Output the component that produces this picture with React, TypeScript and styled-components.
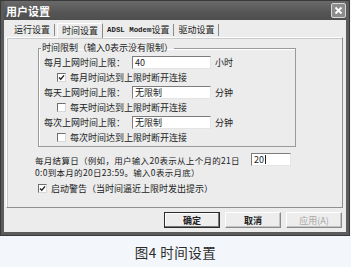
import React from "react";
import styled, { createGlobalStyle } from "styled-components";

const GlobalStyle = createGlobalStyle`
  html, body {
    margin: 0;
    padding: 0;
    background: #f3f7fb;
  }
`;

const UI_FONT = `"Noto Sans CJK SC", "Noto Sans", sans-serif`;

const Page = styled.div`
  width: 351px;
  height: 267px;
  display: flex;
  flex-direction: column;
  font-family: ${UI_FONT};
  color: #222;
`;

const Window = styled.div`
  width: 350px;
  height: 236px;
  box-sizing: border-box;
  display: flex;
  flex-direction: column;
  background: #5b5b5b;
  border: 1px solid #3a3a3a;
  padding: 0 3px 3px;
`;

const TitleBar = styled.div`
  height: 19px;
  display: flex;
  align-items: center;
  justify-content: space-between;
  padding: 0 0 0 2px;
  background: linear-gradient(#6a6a6a, #555 60%, #4e4e4e);
`;

const Title = styled.span`
  color: #fff;
  font-size: 11px;
  font-weight: 700;
  line-height: 12px;
`;

const CloseButton = styled.div`
  width: 13px;
  height: 13px;
  display: flex;
  align-items: center;
  justify-content: center;
  background: #8c8c8c;
  border: 1px solid #d6d6d6;
  border-radius: 2px;
`;

const Body = styled.div`
  flex: 1;
  display: flex;
  flex-direction: column;
  background: #ececec;
  padding: 2px 3px 0 2px;
`;

const TabStrip = styled.div`
  height: 15px;
  display: flex;
  align-items: flex-end;
  padding-left: 4px;
  position: relative;
  z-index: 1;
`;

const Tab = styled.div<{ $active?: boolean }>`
  height: ${({ $active }) => ($active ? "15px" : "12px")};
  box-sizing: border-box;
  display: flex;
  align-items: center;
  padding: 0 4px;
  font-size: 9px;
  line-height: 10px;
  white-space: nowrap;
  background: #ececec;
  border-right: 1px solid #8a8a8a;
  border-left: ${({ $active }) => ($active ? "1px solid #fff" : "none")};
  border-top: ${({ $active }) => ($active ? "1px solid #fff" : "none")};
  margin-bottom: ${({ $active }) => ($active ? "-1px" : "1px")};
  margin-left: ${({ $active }) => ($active ? "2px" : "0")};
`;

const Mono = styled.span`
  font-family: "Liberation Mono", monospace;
  font-weight: 700;
  font-size: 7.4px;
`;

const Panel = styled.div`
  height: 171px;
  box-sizing: border-box;
  border: 1px solid #8f8f8f;
  border-left-color: #fff;
  border-top-color: #fff;
  box-shadow: 1px 0 0 #c9c9c9 inset, 0 1px 0 #c9c9c9 inset;
  padding: 4px 0 0 28px;
  display: flex;
  flex-direction: column;
`;

const Group = styled.fieldset`
  width: 258px;
  box-sizing: border-box;
  margin: 0 0 0 3px;
  padding: 1px 4px 1px 5px;
  border: 1px solid #9a9a9a;
  box-shadow: 1px 1px 0 #fff inset;
  min-width: 0;
`;

const Legend = styled.legend`
  padding: 0 1px;
  margin-left: -3px;
  font-size: 9px;
  line-height: 12px;
`;

const FieldRow = styled.div`
  height: 15px;
  display: flex;
  align-items: center;
  font-size: 9px;
`;

const FieldLabel = styled.span`
  width: 88px;
  white-space: nowrap;
`;

const TextBox = styled.div<{ $width: number }>`
  width: ${({ $width }) => $width}px;
  height: 13px;
  box-sizing: border-box;
  display: flex;
  align-items: center;
  padding-left: 2px;
  background: #fff;
  border-top: 1px solid #7c7c7c;
  border-left: 1px solid #7c7c7c;
  border-right: 1px solid #e4e4e4;
  border-bottom: 1px solid #e4e4e4;
  font-size: 9px;
  line-height: 10px;
`;

const Caret = styled.span`
  width: 1px;
  height: 9px;
  background: #222;
  margin-left: 1px;
`;

const Unit = styled.span`
  margin-left: 4px;
`;

const CheckRow = styled.div<{ $indent: number; $gap: number }>`
  height: 15px;
  display: flex;
  align-items: center;
  gap: ${({ $gap }) => $gap}px;
  padding-left: ${({ $indent }) => $indent}px;
  font-size: 9px;
  white-space: nowrap;
`;

const CheckBox = styled.div`
  width: 9px;
  height: 9px;
  box-sizing: border-box;
  display: flex;
  align-items: center;
  justify-content: center;
  background: #fff;
  border-top: 1px solid #6e6e6e;
  border-left: 1px solid #6e6e6e;
  border-right: 1px solid #d8d8d8;
  border-bottom: 1px solid #d8d8d8;
`;

const SettleRow = styled.div`
  display: flex;
  align-items: flex-start;
  margin-top: 6px;
`;

const SettleText = styled.div`
  width: 216px;
  padding-top: 1px;
  display: flex;
  flex-direction: column;
`;

const SettleLine = styled.span`
  height: 12px;
  display: flex;
  align-items: center;
  font-size: 8.5px;
  letter-spacing: 0.3px;
  white-space: nowrap;
`;

const WarnRow = styled(CheckRow)`
  margin-top: 3px;
`;

const ButtonRow = styled.div`
  display: flex;
  justify-content: flex-end;
  gap: 5px;
  margin-top: 4px;
  padding-right: 1px;
`;

const DialogButton = styled.div<{ $default?: boolean; $disabled?: boolean }>`
  width: 56px;
  height: 16px;
  box-sizing: border-box;
  display: flex;
  align-items: center;
  justify-content: center;
  font-size: 9px;
  font-weight: ${({ $disabled }) => ($disabled ? 400 : 700)};
  color: ${({ $disabled }) => ($disabled ? "#a8a8a8" : "#222")};
  background: #ededed;
  border: 1px solid;
  border-color: ${({ $default }) =>
    $default ? "#2a2a2a" : "#fff #8a8a8a #8a8a8a #fff"};
  box-shadow: ${({ $default }) =>
    $default ? "inset -1px -1px 0 #777, inset 1px 1px 0 #fff" : "inset -1px -1px 0 #c4c4c4"};
`;

const Caption = styled.div`
  flex: 1;
  display: flex;
  align-items: center;
  justify-content: center;
  padding-top: 1px;
  font-size: 13.5px;
  color: #2a2a2a;
  letter-spacing: 0.5px;
`;

const Check = () => (
  <svg width="7" height="7" viewBox="0 0 7 7">
    <path d="M1 3.4 L2.8 5.2 L6 1.4" fill="none" stroke="#222" strokeWidth="1.4" />
  </svg>
);

const CloseGlyph = () => (
  <svg width="9" height="9" viewBox="0 0 9 9">
    <path d="M1.5 1.5 L7.5 7.5 M7.5 1.5 L1.5 7.5" stroke="#fff" strokeWidth="1.8" />
  </svg>
);

const limits = [
  { label: "每月上网时间上限：", value: "40", unit: "小时", check: "每月时间达到上限时断开连接", checked: true },
  { label: "每天上网时间上限：", value: "无限制", unit: "分钟", check: "每天时间达到上限时断开连接", checked: false },
  { label: "每次上网时间上限：", value: "无限制", unit: "分钟", check: "每次时间达到上限时断开连接", checked: false },
];

export default function App() {
  return (
    <Page>
      <GlobalStyle />
      <Window>
        <TitleBar>
          <Title>用户设置</Title>
          <CloseButton>
            <CloseGlyph />
          </CloseButton>
        </TitleBar>
        <Body>
          <TabStrip>
            <Tab>运行设置</Tab>
            <Tab $active>时间设置</Tab>
            <Tab>
              <Mono>ADSL Modem</Mono>设置
            </Tab>
            <Tab>驱动设置</Tab>
          </TabStrip>
          <Panel>
            <Group>
              <Legend>时间限制（输入0表示没有限制）</Legend>
              {limits.map((item) => (
                <React.Fragment key={item.label}>
                  <FieldRow>
                    <FieldLabel>{item.label}</FieldLabel>
                    <TextBox $width={79}>{item.value}</TextBox>
                    <Unit>{item.unit}</Unit>
                  </FieldRow>
                  <CheckRow $indent={13} $gap={4}>
                    <CheckBox>{item.checked && <Check />}</CheckBox>
                    {item.check}
                  </CheckRow>
                </React.Fragment>
              ))}
            </Group>
            <SettleRow>
              <SettleText>
                <SettleLine>每月结算日（例如，用户输入20表示从上个月的21日</SettleLine>
                <SettleLine>0:0到本月的20日23:59。输入0表示月底）</SettleLine>
              </SettleText>
              <TextBox $width={40}>
                20
                <Caret />
              </TextBox>
            </SettleRow>
            <WarnRow $indent={3} $gap={4}>
              <CheckBox>
                <Check />
              </CheckBox>
              启动警告（当时间逼近上限时发出提示）
            </WarnRow>
          </Panel>
          <ButtonRow>
            <DialogButton $default>确定</DialogButton>
            <DialogButton>取消</DialogButton>
            <DialogButton $disabled>应用(A)</DialogButton>
          </ButtonRow>
        </Body>
      </Window>
      <Caption>图4 时间设置</Caption>
    </Page>
  );
}
